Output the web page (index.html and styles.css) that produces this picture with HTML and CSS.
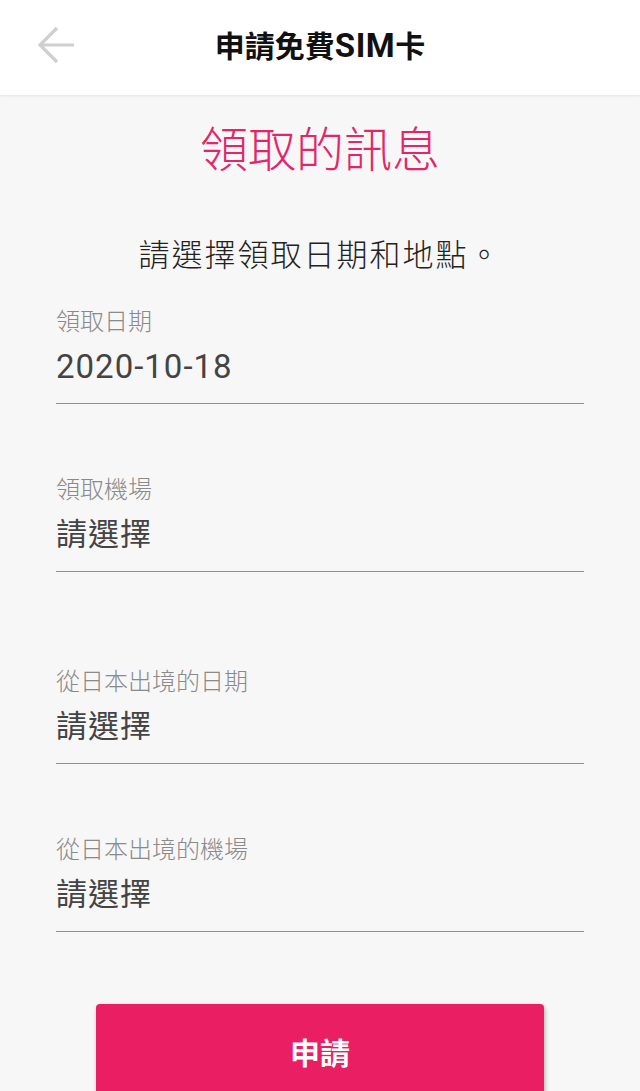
FILE: index.html
```html
<!DOCTYPE html>
<html lang="zh-Hant">
<head>
    <meta charset="UTF-8">
    <meta name="viewport" content="width=device-width, initial-scale=1.0">
    <title>申請免費SIM卡</title>
    <link rel="stylesheet" href="styles.css">
</head>
<body>

    <header class="top-bar">
        <a class="back-btn" href="#" aria-label="返回">
            <svg width="40" height="40" viewBox="0 0 40 40">
                <path d="M38 20H4M21 3L4 20l17 17" fill="none" stroke="#cfcfcf" stroke-width="3.2"/>
            </svg>
        </a>
        <h1 class="top-title">申請免費<span class="latin">SIM</span>卡</h1>
        <div></div>
    </header>

    <main class="content">
        <h2 class="page-heading">領取的訊息</h2>
        <p class="intro">請選擇領取日期和地點。</p>

        <div class="field">
            <label class="field-label">領取日期</label>
            <div class="field-value date">2020-10-18</div>
        </div>

        <div class="field">
            <label class="field-label">領取機場</label>
            <div class="field-value">請選擇</div>
        </div>

        <div class="field field-spaced">
            <label class="field-label">從日本出境的日期</label>
            <div class="field-value">請選擇</div>
        </div>

        <div class="field">
            <label class="field-label">從日本出境的機場</label>
            <div class="field-value">請選擇</div>
        </div>

        <button class="submit-btn">申請</button>
    </main>

</body>
</html>
```

FILE: styles.css
```css
body {
    font-family: "Noto Sans CJK TC", Roboto, sans-serif;
    margin: 0;
    background: #f7f7f7;
    color: #222;
}

/* Top bar */
.top-bar {
    height: 95px;
    box-sizing: border-box;
    padding-bottom: 6px;
    background: #ffffff;
    box-shadow: 0 1px 3px rgba(0, 0, 0, 0.08);
    display: grid;
    grid-template-columns: 1fr auto 1fr;
    align-items: center;
}

.back-btn {
    display: flex;
    padding-left: 36px;
}

.top-title {
    margin: 0;
    font-size: 30px;
    font-weight: 700;
    line-height: 40px;
    color: #111;
}

.top-title .latin {
    font-family: Roboto, sans-serif;
    font-size: 33px;
    letter-spacing: 0.5px;
}

/* Content */
.content {
    padding: 23px 56px 0;
    display: flex;
    flex-direction: column;
}

.page-heading {
    margin: 0;
    text-align: center;
    font-size: 48px;
    font-weight: 300;
    line-height: 56px;
    color: #e42669;
}

.intro {
    margin: 59px 0 0;
    text-align: center;
    font-size: 31px;
    font-weight: 300;
    letter-spacing: 2px;
    line-height: 40px;
    color: #222;
}

.field {
    margin-top: 68px;
    padding-bottom: 14px;
    border-bottom: 1px solid #8f8f8f;
}

.intro + .field {
    margin-top: 31px;
}

.field-spaced {
    margin-top: 92px;
}

.field-label {
    display: block;
    font-size: 24px;
    font-weight: 300;
    line-height: 32px;
    color: #8a8a8a;
}

.field-value {
    margin-top: 9px;
    font-family: Roboto, "Noto Sans CJK TC", sans-serif;
    font-size: 31px;
    letter-spacing: 1px;
    line-height: 44px;
    color: #444;
}

.field-value.date {
    font-size: 33px;
}

.submit-btn {
    margin: 72px 40px 0;
    height: 96px;
    border: none;
    border-radius: 4px;
    background: #e91e63;
    box-shadow: 1px 2px 4px rgba(0, 0, 0, 0.3);
    color: #ffffff;
    font-family: "Noto Sans CJK TC", sans-serif;
    font-size: 30px;
    font-weight: 700;
    padding-bottom: 4px;
    cursor: pointer;
}
```
